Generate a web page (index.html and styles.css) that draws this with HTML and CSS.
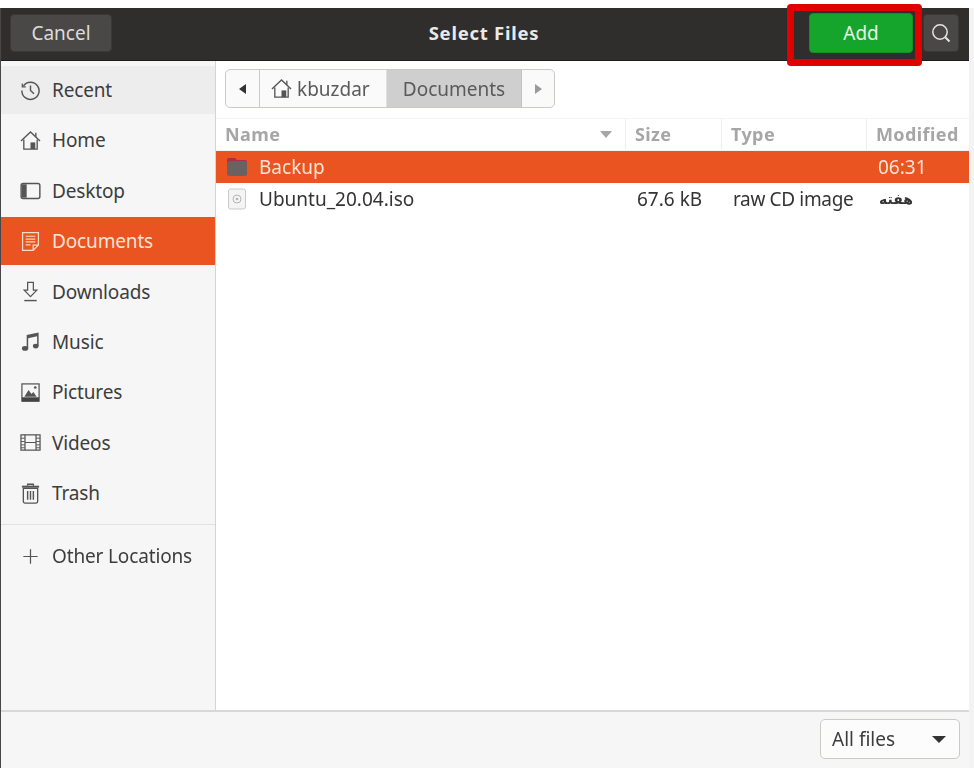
FILE: index.html
```html
<!DOCTYPE html>
<html lang="en">
<head>
<meta charset="utf-8">
<title>Select Files</title>
<link rel="stylesheet" href="styles.css">
</head>
<body>
<div class="window">
  <header class="headerbar">
    <button class="hbtn cancel">Cancel</button>
    <div class="title">Select Files</div>
    <button class="hbtn add">Add</button>
    <button class="hbtn search" aria-label="Search">
      <svg width="20" height="20" viewBox="0 0 20 20" fill="none" stroke="#e4e4e4" stroke-width="1.5"><circle cx="9" cy="9" r="7.200"/><path d="M14.300 14.300l4.200 4.200" stroke-width="2"/></svg>
    </button>
    <div class="highlight"></div>
  </header>
  <div class="main">
    <nav class="sidebar">
      <div class="places">
        <div class="place hover">
          <svg class="ic" viewBox="0 0 22 22" fill="none" stroke="#555" stroke-width="1.5"><path d="M3.600 6.200A9 9 0 1 1 2 11"/><path d="M2.400 3.600v3.600h3.600" stroke-width="1.300"/><path d="M11 5.800V11l3.600 3.400"/></svg>
          <span>Recent</span>
        </div>
        <div class="place">
          <svg class="ic" viewBox="0 0 22 22" fill="none" stroke="#555" stroke-width="1.400"><path d="M1 11.500 11 2l10 9.500"/><path d="M4 10v10h14V10"/><path d="M16.600 3v4"/><rect x="11" y="13" width="5" height="7" fill="#555" stroke="none"/></svg>
          <span>Home</span>
        </div>
        <div class="place">
          <svg class="ic" viewBox="0 0 22 22" fill="none"><rect x="1.200" y="3.700" width="19.600" height="15.600" rx="2" stroke="#555" stroke-width="1.500"/><path d="M2 4.500h5v14H2z" fill="#555"/></svg>
          <span>Desktop</span>
        </div>
        <div class="place active">
          <svg class="ic" viewBox="0 0 22 22" fill="none" stroke="#fbd9cb" stroke-width="1.300"><path d="M2.700 1.700h16.600v13l-5.500 5.600H2.700z"/><path d="M13.800 20.300v-5.600h5.500"/><path d="M6 5.500h10M6 8.500h10M6 11.500h10M6 14.500h5"/></svg>
          <span>Documents</span>
        </div>
        <div class="place">
          <svg class="ic" viewBox="0 0 22 22" fill="none" stroke="#555" stroke-width="1.300"><path d="M8 1.500h6v8h3.600L11 16.400 4.400 9.500H8z"/><path d="M4.500 20.500h13" stroke-width="1.500"/></svg>
          <span>Downloads</span>
        </div>
        <div class="place">
          <svg class="ic" viewBox="0 0 22 22" fill="#555"><path d="M7 4.200 19.500 1.500v14h-1.600V5.600L8.600 7.500v11H7z"/><ellipse cx="5.300" cy="18.300" rx="3.300" ry="2.500"/><ellipse cx="16.500" cy="15.800" rx="3" ry="2.500"/></svg>
          <span>Music</span>
        </div>
        <div class="place">
          <svg class="ic" viewBox="0 0 22 22" fill="none"><rect x="2" y="2" width="18" height="18" stroke="#555" stroke-width="1.300"/><path d="M2 16h18v4.500H2z" fill="#444"/><path d="M4.500 15.500 9 8.500l3 4 2-2 3.500 5z" fill="#555"/><circle cx="16" cy="5.800" r="1.400" fill="#555"/></svg>
          <span>Pictures</span>
        </div>
        <div class="place">
          <svg class="ic" viewBox="0 0 22 22" fill="none" stroke="#555" stroke-width="1.300"><rect x="1" y="3" width="20" height="16"/><path d="M5.200 3v16M16.800 3v16M5.200 11h11.600"/><path d="M1 6.500h4M1 10h4M1 13.500h4M1 16.500h4M17 6.500h4M17 10h4M17 13.500h4M17 16.500h4" stroke-width="1"/></svg>
          <span>Videos</span>
        </div>
        <div class="place">
          <svg class="ic" viewBox="0 0 22 22" fill="none" stroke="#555" stroke-width="1.400"><path d="M3.500 5.500h15v14a1.500 1.500 0 0 1-1.500 1.500H5a1.500 1.500 0 0 1-1.500-1.500z"/><path d="M2 3.800h18" stroke-width="2"/><path d="M8 3V1.300h6V3"/><path d="M8 8.500v9M11 8.500v9M14 8.500v9" stroke-width="1.500"/></svg>
          <span>Trash</span>
        </div>
      </div>
      <div class="place other">
        <svg class="ic" viewBox="0 0 22 22" fill="none" stroke="#555" stroke-width="1.300"><path d="M11 3.500v15M3.500 11h15"/></svg>
        <span>Other Locations</span>
      </div>
    </nav>
    <section class="content">
      <div class="pathwrap">
        <div class="pathbar">
          <div class="seg nav"><i class="tri left"></i></div>
          <div class="seg home">
            <svg class="homeic" viewBox="0 0 22 22" fill="none" stroke="#555" stroke-width="1.400"><path d="M1 11.500 11 2l10 9.500"/><path d="M4 10v10h14V10"/><path d="M16.600 3v4"/><rect x="11" y="13" width="5" height="7" fill="#555" stroke="none"/></svg>
            <span>kbuzdar</span>
          </div>
          <div class="seg current">Documents</div>
          <div class="seg nav last"><i class="tri right"></i></div>
        </div>
      </div>
      <div class="row head">
        <div class="cell name">Name<i class="sort"></i></div>
        <div class="cell size">Size</div>
        <div class="cell type">Type</div>
        <div class="cell mod">Modified</div>
      </div>
      <div class="row file selected">
        <div class="cell name">
          <svg class="fileic" viewBox="0 0 22 22"><path d="M1 4a2 2 0 0 1 2-2h6l2 2h8a2 2 0 0 1 2 2v2H1z" fill="#a8314a"/><rect x="1" y="5" width="20" height="15" rx="2.500" fill="#6a6160"/></svg>
          Backup
        </div>
        <div class="cell size"></div>
        <div class="cell type"></div>
        <div class="cell mod">06:31</div>
      </div>
      <div class="row file">
        <div class="cell name">
          <svg class="fileic" viewBox="0 0 22 22" fill="none"><rect x="2.500" y="1" width="17" height="20" rx="2" fill="#f4f4f4" stroke="#c9c9c9"/><circle cx="11" cy="11" r="4" stroke="#b5b5b5"/><circle cx="11" cy="11" r="1.300" fill="#b5b5b5"/></svg>
          Ubuntu_20.04.iso
        </div>
        <div class="cell size">67.6 kB</div>
        <div class="cell type">raw CD image</div>
        <div class="cell mod fa" lang="fa">هفته</div>
      </div>
    </section>
  </div>
  <footer class="bottombar">
    <div class="combo"><span>All files</span><i class="tri down"></i></div>
  </footer>
</div>
</body>
</html>
```
FILE: styles.css
```css
* { box-sizing: border-box; }
html, body { margin: 0; height: 100%; }
body {
  background: #fff;
  padding-top: 8px;
  overflow: hidden;
  font-family: "Noto Sans", "DejaVu Sans", sans-serif;
  font-size: 19px;
  color: #3d3d3d;
}
.window {
  width: 969px;
  height: 760px;
  display: flex;
  flex-direction: column;
  background: #fff;
  box-shadow: 5px 0 0 #f3f3f3;
  border-left: 1px solid #4a4548;
  filter: blur(0.35px);
}
.headerbar {
  position: relative;
  height: 53px;
  flex: none;
  background: #302d2d;
  display: flex;
  align-items: center;
  padding: 0 10px 3px 9px;
  border-bottom: 1px solid #1e1c1c;
}
.hbtn {
  font: inherit;
  height: 38px;
  border: 1px solid #3a3838;
  border-radius: 4px;
  background: #4a4846;
  color: #dcdcdc;
  padding: 0;
  display: flex;
  align-items: center;
  justify-content: center;
}
.cancel { width: 102px; }
.title {
  flex: 1;
  text-align: center;
  color: #e9e9e9;
  font-weight: 700;
  font-size: 18.500px;
  letter-spacing: 0.75px;
  padding-left: 47px;
}
.add {
  width: 104px;
  height: 40px;
  background: #16a52c;
  border-color: #129026;
  color: #e4f5e6;
  margin-right: 10px;
}
.search { width: 36px; }
.highlight {
  position: absolute;
  left: 786px;
  top: -4px;
  width: 135px;
  height: 62px;
  border: 7px solid #e00000;
  border-radius: 4px;
}
.main { flex: 1; display: flex; min-height: 0; }
.sidebar {
  width: 215px;
  flex: none;
  background: #f6f6f6;
  border-right: 1px solid #d4d4d4;
  padding-top: 5px;
  color: #3d3d3d;
  letter-spacing: -0.15px;
}
.places {
  border-bottom: 1px solid #e2e2e2;
  padding-bottom: 7px;
  display: flex;
  flex-direction: column;
  gap: 2.400px;
}
.place {
  height: 48px;
  display: flex;
  align-items: center;
  gap: 11px;
  padding-left: 19px;
}
.place.hover { background: #ededed; }
.place.active { background: #e95420; color: #fde3d8; }
.place.other { margin-top: 7px; }
.ic { width: 21px; height: 21px; flex: none; }
.content { flex: 1; min-width: 0; display: flex; flex-direction: column; }
.pathwrap { padding: 8px 9px 9px; height: 57px; }
.pathbar {
  display: inline-flex;
  height: 39px;
  border: 1px solid #cdc9c5;
  border-radius: 5px;
  background: #fafafa;
  overflow: hidden;
  color: #5a5a5a;
}
.seg { display: flex; align-items: center; justify-content: center; }
.seg.nav { width: 33px; }
.seg.nav.last { width: 32px; }
.seg.home {
  width: 128px;
  gap: 5px;
  justify-content: flex-start;
  padding-left: 11px;
  border-left: 1px solid #cdc9c5;
  border-right: 1px solid #e2e0de;
}
.seg.current { width: 135px; background: #cfcfcf; border-right: 1px solid #c2c2c2; }
.homeic { width: 21px; height: 21px; flex: none; }
.tri { display: block; width: 0; height: 0; }
.tri.left { border: 5px solid transparent; border-left-width: 0; border-right: 7px solid #333; }
.tri.right { border: 5px solid transparent; border-right-width: 0; border-left: 7px solid #9a9a9a; }
.tri.down { border: 5px solid transparent; border-bottom-width: 0; border-top: 7px solid #333; border-left-width: 7px; border-right-width: 7px; }
.row { display: grid; grid-template-columns: 410px 96px 145px 1fr; align-items: center; }
.row.head {
  height: 33px;
  font-size: 18px;
  font-weight: 700;
  letter-spacing: 0.4px;
  color: #a6a6a6;
  border-top: 1px solid #f4f4f4;
  border-bottom: 1px solid #f4f4f4;
}
.row.head .cell { height: 100%; padding-bottom: 2px; border-right: 1px solid #eeeeee; display: flex; align-items: center; }
.row.head .cell.mod { border-right: 0; }
.row.file { height: 32px; color: #333; }
.row.file .cell { display: flex; align-items: center; }
.row.selected { background: #e95420; color: #fde3d8; }
.name { padding-left: 9px; position: relative; }
.size { padding-left: 9px; }
.type { padding-left: 9px; }
.mod { padding-left: 9px; }
.row.file .name { gap: 11px; padding-left: 10px; }
.row.file .size { padding-left: 11px; }
.row.file .type { padding-left: 11px; white-space: nowrap; letter-spacing: -0.35px; }
.row.file .mod { padding-left: 11px; }
.row.file .mod.fa { font-family: "DejaVu Sans", sans-serif; font-size: 14px; font-weight: 700; padding-left: 12px; }
.sort {
  position: absolute;
  right: 13px;
  top: 12px;
  border: 6px solid transparent;
  border-top: 7px solid #a6a6a6;
  border-bottom-width: 0;
}
.fileic { width: 22px; height: 22px; flex: none; }
.bottombar {
  height: 58px;
  flex: none;
  background: #f6f6f6;
  border-top: 2px solid #d8d8d8;
  display: flex;
  justify-content: flex-end;
  align-items: center;
  padding: 0 9px 2px 0;
}
.combo {
  width: 140px;
  height: 40px;
  border: 1px solid #cdc9c5;
  border-radius: 5px;
  background: #fcfcfc;
  display: flex;
  align-items: center;
  justify-content: space-between;
  padding: 0 13px 0 11px;
  color: #3d3d3d;
}
```
